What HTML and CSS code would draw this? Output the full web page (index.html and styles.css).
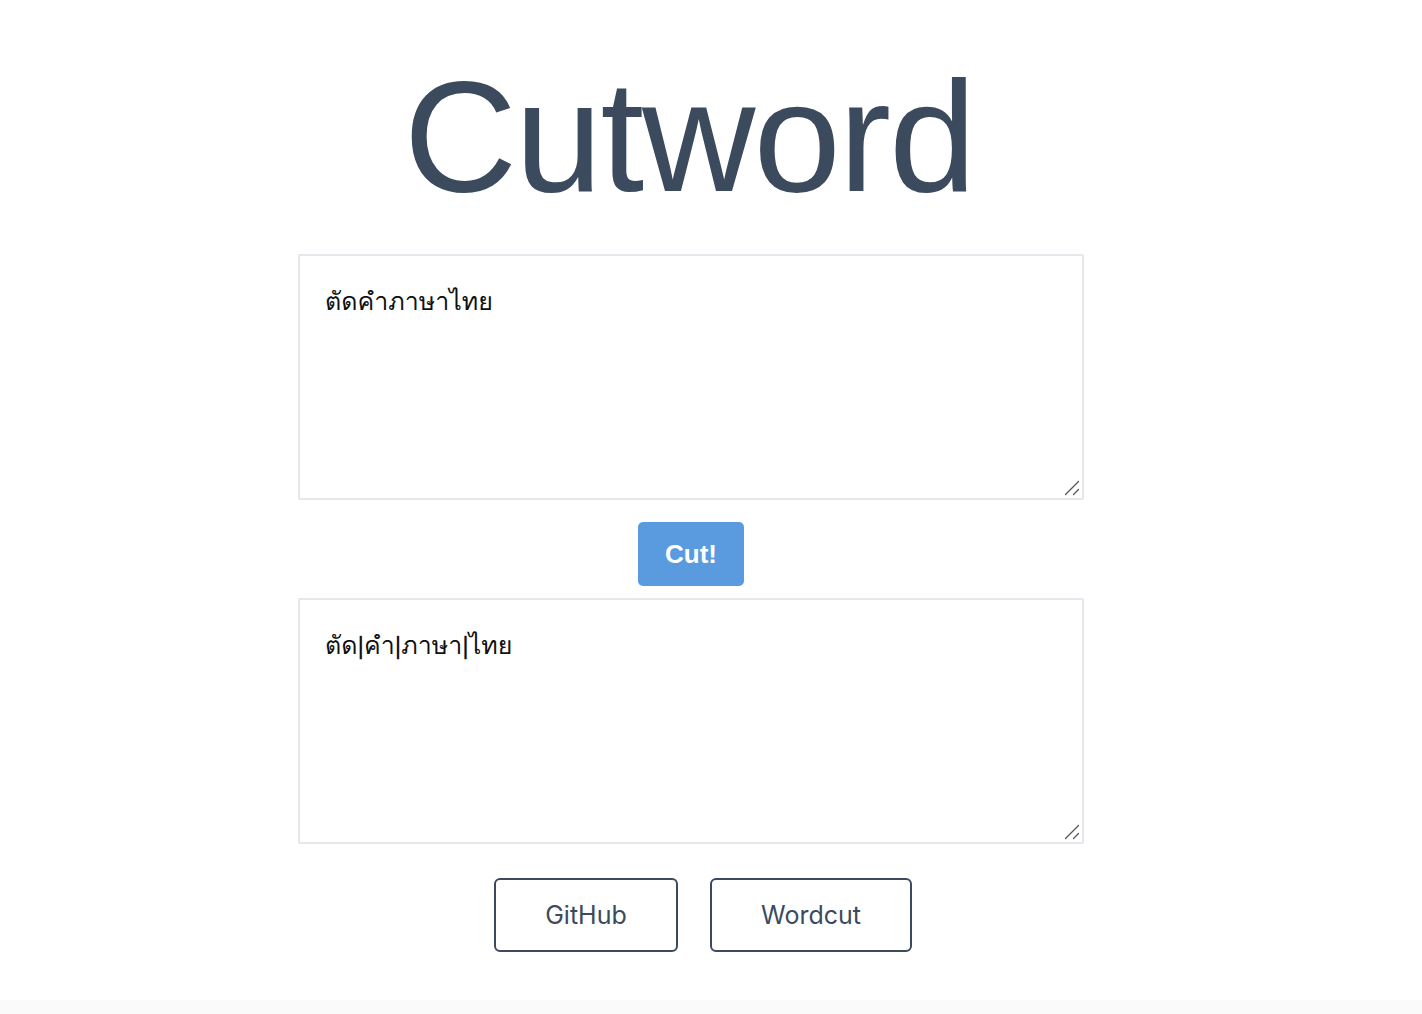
FILE: index.html
```html
<!DOCTYPE html>
<html lang="th">
<head>
<meta charset="utf-8">
<title>Cutword</title>
<link rel="stylesheet" href="styles.css">
</head>
<body>
<main class="page">
  <div class="container">
    <h1 class="title">Cutword</h1>
    <div class="box-wrap">
      <textarea class="box" rows="6">ตัดคำภาษาไทย</textarea>
      <svg class="grip" width="16" height="16" viewBox="0 0 16 16" aria-hidden="true"><path d="M1.5 14.5 L14.5 1.5 M9.5 14.5 L14.5 9.5" stroke="#555" stroke-width="1.3" stroke-linecap="round" fill="none"/></svg>
    </div>
    <div class="cut-row"><button class="cut-btn">Cut!</button></div>
    <div class="box-wrap">
      <textarea class="box" rows="6">ตัด|คำ|ภาษา|ไทย</textarea>
      <svg class="grip" width="16" height="16" viewBox="0 0 16 16" aria-hidden="true"><path d="M1.5 14.5 L14.5 1.5 M9.5 14.5 L14.5 9.5" stroke="#555" stroke-width="1.3" stroke-linecap="round" fill="none"/></svg>
    </div>
    <div class="links">
      <a class="link-btn link-github" href="#">GitHub</a>
      <a class="link-btn link-wordcut" href="#">Wordcut</a>
    </div>
  </div>
</main>
<div class="footer"></div>
</body>
</html>
```
FILE: styles.css
```css
html, body {
  margin: 0;
  padding: 0;
  background: #ffffff;
}
body {
  font-family: "Liberation Sans", Arial, sans-serif;
  color: #3c4a5e;
}
.page {
  height: 1000px;
  box-sizing: border-box;
  padding-top: 42px;
}
.container {
  width: 786px;
  margin-left: 298px;
  display: flex;
  flex-direction: column;
}
.title {
  margin: 0;
  font-weight: 400;
  font-size: 157px;
  line-height: 190px;
  letter-spacing: -2px;
  text-align: center;
  color: #3c4a5e;
  height: 212px;
  padding-right: 4px;
}
.box-wrap {
  position: relative;
  width: 786px;
  height: 246px;
}
.box {
  display: block;
  box-sizing: border-box;
  width: 786px;
  height: 246px;
  border: 2px solid #e4e7eb;
  border-radius: 2px;
  padding: 28px 25px;
  font-family: "Loma", "Garuda", "Noto Sans Thai Looped", "Tlwg Typo", "Noto Sans Thai", "Liberation Sans", sans-serif;
  font-size: 25px;
  line-height: 34px;
  color: #111;
  background: #fff;
  resize: none;
  outline: none;
}
.grip {
  position: absolute;
  right: 4px;
  bottom: 4px;
}
.cut-row {
  display: flex;
  justify-content: center;
  padding: 22px 0 12px;
}
.cut-btn {
  width: 106px;
  height: 64px;
  border: none;
  border-radius: 5px;
  background: #5a9be0;
  color: #fff;
  font-family: "Liberation Sans", Arial, sans-serif;
  font-weight: 700;
  font-size: 26px;
  cursor: pointer;
}
.links {
  display: flex;
  justify-content: center;
  gap: 32px;
  padding-left: 24px;
  margin-top: 34px;
}
.link-btn {
  display: flex;
  align-items: center;
  justify-content: center;
  box-sizing: border-box;
  height: 74px;
  border: 2px solid #3c4a5e;
  border-radius: 6px;
  color: #3c4a5e;
  text-decoration: none;
  font-size: 25px;
  font-family: Inter, "Liberation Sans", sans-serif;
}
.link-github { width: 184px; }
.link-wordcut { width: 202px; }
.footer {
  height: 14px;
  background: #fafafa;
}
```
